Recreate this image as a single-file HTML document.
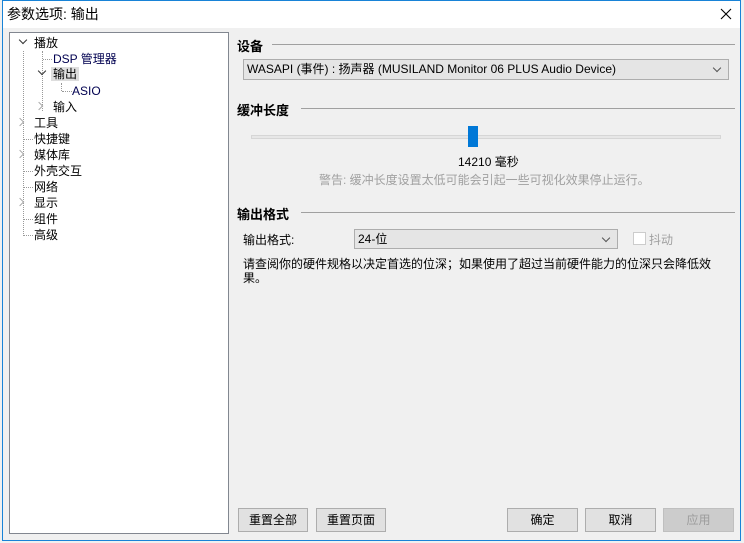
<!DOCTYPE html>
<html><head><meta charset="utf-8"><style>
*{box-sizing:border-box;margin:0;padding:0}
body{width:744px;height:543px;background:#f0f0f0;position:relative;overflow:hidden;font-family:"Liberation Sans","Microsoft YaHei","Noto Sans CJK SC",sans-serif;font-size:12px;color:#000}
.win{position:absolute;left:2px;top:0;width:739px;height:541px;border:1px solid #1883d7;background:#f0f0f0}
.title{position:absolute;left:0;top:0;width:100%;height:27px;background:#fff;font-size:14px;line-height:26px;padding-left:4px}
.a{position:absolute;white-space:nowrap}
.tree{position:absolute;left:9px;top:32px;width:220px;height:502px;background:#fff;border:1px solid #828790}
.ti{position:absolute;white-space:nowrap;font-size:12px;line-height:14px}
.h{font-weight:bold;font-size:13px}
.line{position:absolute;height:1px;background:#a0a0a0}
.combo{position:absolute;background:#e5e5e5;border:1px solid #adadad;line-height:18px;padding-left:3px}
.combo:after{content:"";position:absolute;right:8px;top:5px;width:5px;height:5px;border-right:1px solid #555;border-bottom:1px solid #555;transform:rotate(45deg)}
.btn{position:absolute;top:508px;height:24px;background:#e1e1e1;border:1px solid #adadad;text-align:center;line-height:22px}
.dot{position:absolute;border-left:1px dotted #999}
.doth{position:absolute;border-top:1px dotted #999}
.chev{position:absolute;width:6px;height:6px;border-right:1.5px solid #333;border-bottom:1.5px solid #333}
.g{border-color:#aaa}
</style></head><body>
<div class="win">
<div class="title">参数选项: 输出
<svg style="position:absolute;right:8px;top:7px" width="12" height="12" viewBox="0 0 12 12"><path d="M1 1L11 11M11 1L1 11" stroke="#000" stroke-width="1.1"/></svg>
</div>
</div>
<div class="tree">
<div class="chev" style="left:10px;top:4px;transform:rotate(45deg)"></div>
<div class="ti" style="left:24px;top:3px">播放</div>
<div class="dot" style="left:32px;top:18px;height:60px"></div>
<div class="doth" style="left:33px;top:26px;width:9px"></div>
<div class="ti" style="left:43px;top:19px;color:#000050">DSP 管理器</div>
<div class="chev" style="left:29px;top:35px;transform:rotate(45deg)"></div>
<div class="ti" style="left:41px;top:34px;background:#ddd;padding:0 2px">输出</div>
<div class="dot" style="left:51px;top:50px;height:8px"></div>
<div class="doth" style="left:52px;top:58px;width:10px"></div>
<div class="ti" style="left:62px;top:51px;color:#000050">ASIO</div>
<div class="chev g" style="left:26px;top:70px;transform:rotate(-45deg)"></div>
<div class="ti" style="left:43px;top:67px">输入</div>
<div class="dot" style="left:13px;top:18px;height:185px"></div>
<div class="chev g" style="left:7px;top:86px;transform:rotate(-45deg)"></div>
<div class="ti" style="left:24px;top:83px">工具</div>
<div class="doth" style="left:14px;top:106px;width:9px"></div>
<div class="ti" style="left:24px;top:99px">快捷键</div>
<div class="chev g" style="left:7px;top:118px;transform:rotate(-45deg)"></div>
<div class="ti" style="left:24px;top:115px">媒体库</div>
<div class="doth" style="left:14px;top:138px;width:9px"></div>
<div class="ti" style="left:24px;top:131px">外壳交互</div>
<div class="doth" style="left:14px;top:154px;width:9px"></div>
<div class="ti" style="left:24px;top:147px">网络</div>
<div class="chev g" style="left:7px;top:166px;transform:rotate(-45deg)"></div>
<div class="ti" style="left:24px;top:163px">显示</div>
<div class="doth" style="left:14px;top:186px;width:9px"></div>
<div class="ti" style="left:24px;top:179px">组件</div>
<div class="doth" style="left:14px;top:202px;width:9px"></div>
<div class="ti" style="left:24px;top:195px">高级</div>
</div>

<div class="a h" style="left:237px;top:36px">设备</div>
<div class="line" style="left:272px;top:44px;width:463px"></div>
<div class="combo" style="left:243px;top:59px;width:486px;height:21px">WASAPI (事件) : 扬声器 (MUSILAND Monitor 06 PLUS Audio Device)</div>

<div class="a h" style="left:237px;top:100px">缓冲长度</div>
<div class="line" style="left:301px;top:108px;width:434px"></div>
<div style="position:absolute;left:251px;top:135px;width:470px;height:4px;background:#e7e7e7;border:1px solid #d6d6d6"></div>
<div style="position:absolute;left:468px;top:126px;width:10px;height:21px;background:#0078d7"></div>
<div class="a" style="left:458px;top:153px">14210 毫秒</div>
<div class="a" style="left:319px;top:171px;color:#a0a0a0">警告: 缓冲长度设置太低可能会引起一些可视化效果停止运行。</div>

<div class="a h" style="left:237px;top:204px">输出格式</div>
<div class="line" style="left:301px;top:212px;width:434px"></div>
<div class="a" style="left:243px;top:231px">输出格式:</div>
<div class="combo" style="left:354px;top:229px;width:264px;height:20px">24-位</div>
<div style="position:absolute;left:633px;top:232px;width:13px;height:13px;border:1px solid #ccc;background:#fff"></div>
<div class="a" style="left:649px;top:231px;color:#a0a0a0">抖动</div>
<div class="a" style="left:243px;top:257px;width:480px;white-space:normal;line-height:14px">请查阅你的硬件规格以决定首选的位深；如果使用了超过当前硬件能力的位深只会降低效果。</div>

<div class="btn" style="left:238px;width:70px">重置全部</div>
<div class="btn" style="left:316px;width:70px">重置页面</div>
<div class="btn" style="left:507px;width:71px">确定</div>
<div class="btn" style="left:585px;width:71px">取消</div>
<div class="btn" style="left:663px;width:71px;background:#ccc;border-color:#bfbfbf;color:#9d9d9d">应用</div>
</body></html>
